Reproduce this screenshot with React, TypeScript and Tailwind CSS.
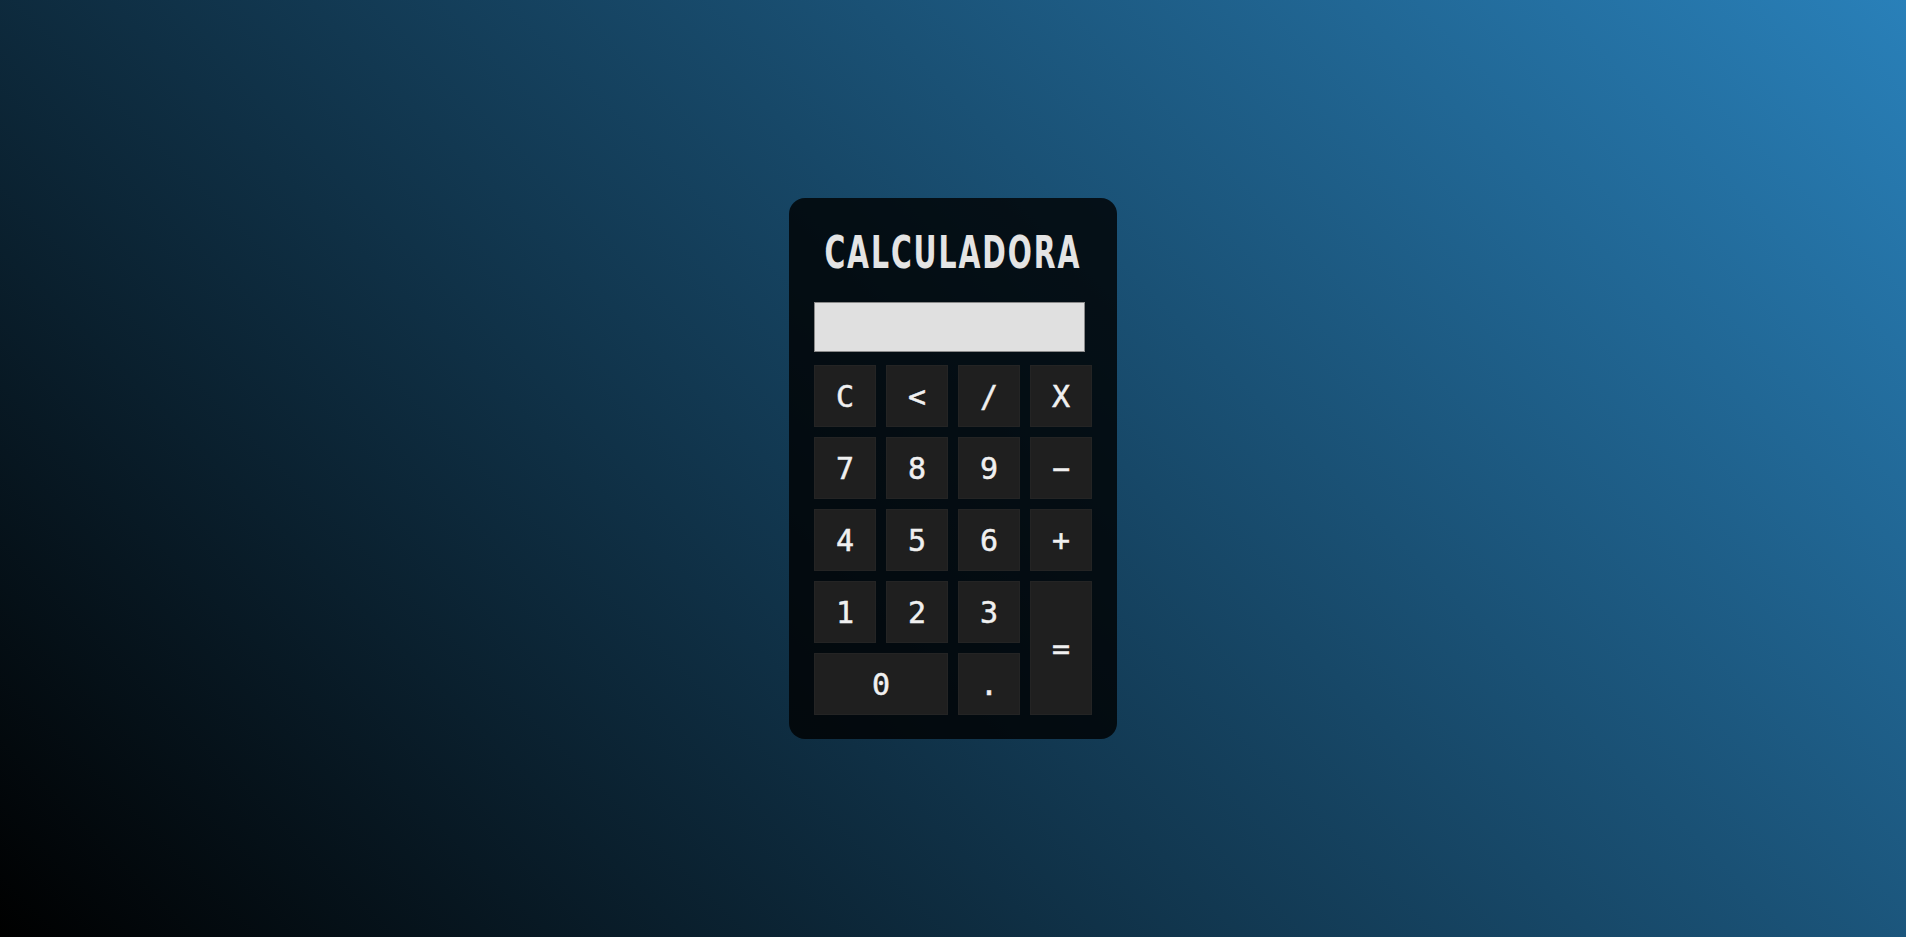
import React from "react"

// Calculator keys, in grid order
const keys: { label: string; span?: string }[] = [
  { label: "C" },
  { label: "<" },
  { label: "/" },
  { label: "X" },
  { label: "7" },
  { label: "8" },
  { label: "9" },
  { label: "−" },
  { label: "4" },
  { label: "5" },
  { label: "6" },
  { label: "+" },
  { label: "1" },
  { label: "2" },
  { label: "3" },
  { label: "=", span: "row-span-2" },
  { label: "0", span: "col-span-2" },
  { label: "." },
]

export default function App() {
  return (
    <div className="min-h-screen w-full flex items-center justify-center bg-[linear-gradient(45deg,#000000,#2980b9)]">
      <div className="w-[328px] rounded-2xl bg-black/80 pt-[24px] px-[25px] pb-[24px]">
        {/* Title */}
        <div className="h-[60px] mb-[20px] flex items-center justify-center">
          <h1 className="whitespace-nowrap leading-none text-[45px] font-bold tracking-[3px] text-[#e4e4e4] scale-x-[0.63] font-['DejaVu_Sans',sans-serif]">
            CALCULADORA
          </h1>
        </div>
        {/* Display */}
        <input
          type="text"
          readOnly
          className="block w-[271px] h-[50px] bg-[#e0e0e0] border border-[#8a8a8a] mb-[13px] outline-none"
        />
        {/* Keys */}
        <div className="grid grid-cols-4 auto-rows-[62px] gap-[10px]">
          {keys.map((k, i) => (
            <button
              key={i}
              className={`${k.span ?? ""} flex items-center justify-center bg-[#1f1f1f] border border-[#242424] text-[#f0f0f0] text-[30px] font-['DejaVu_Sans_Mono',monospace] [-webkit-text-stroke:0.5px_#f0f0f0]`}
            >
              {k.label}
            </button>
          ))}
        </div>
      </div>
    </div>
  )
}
